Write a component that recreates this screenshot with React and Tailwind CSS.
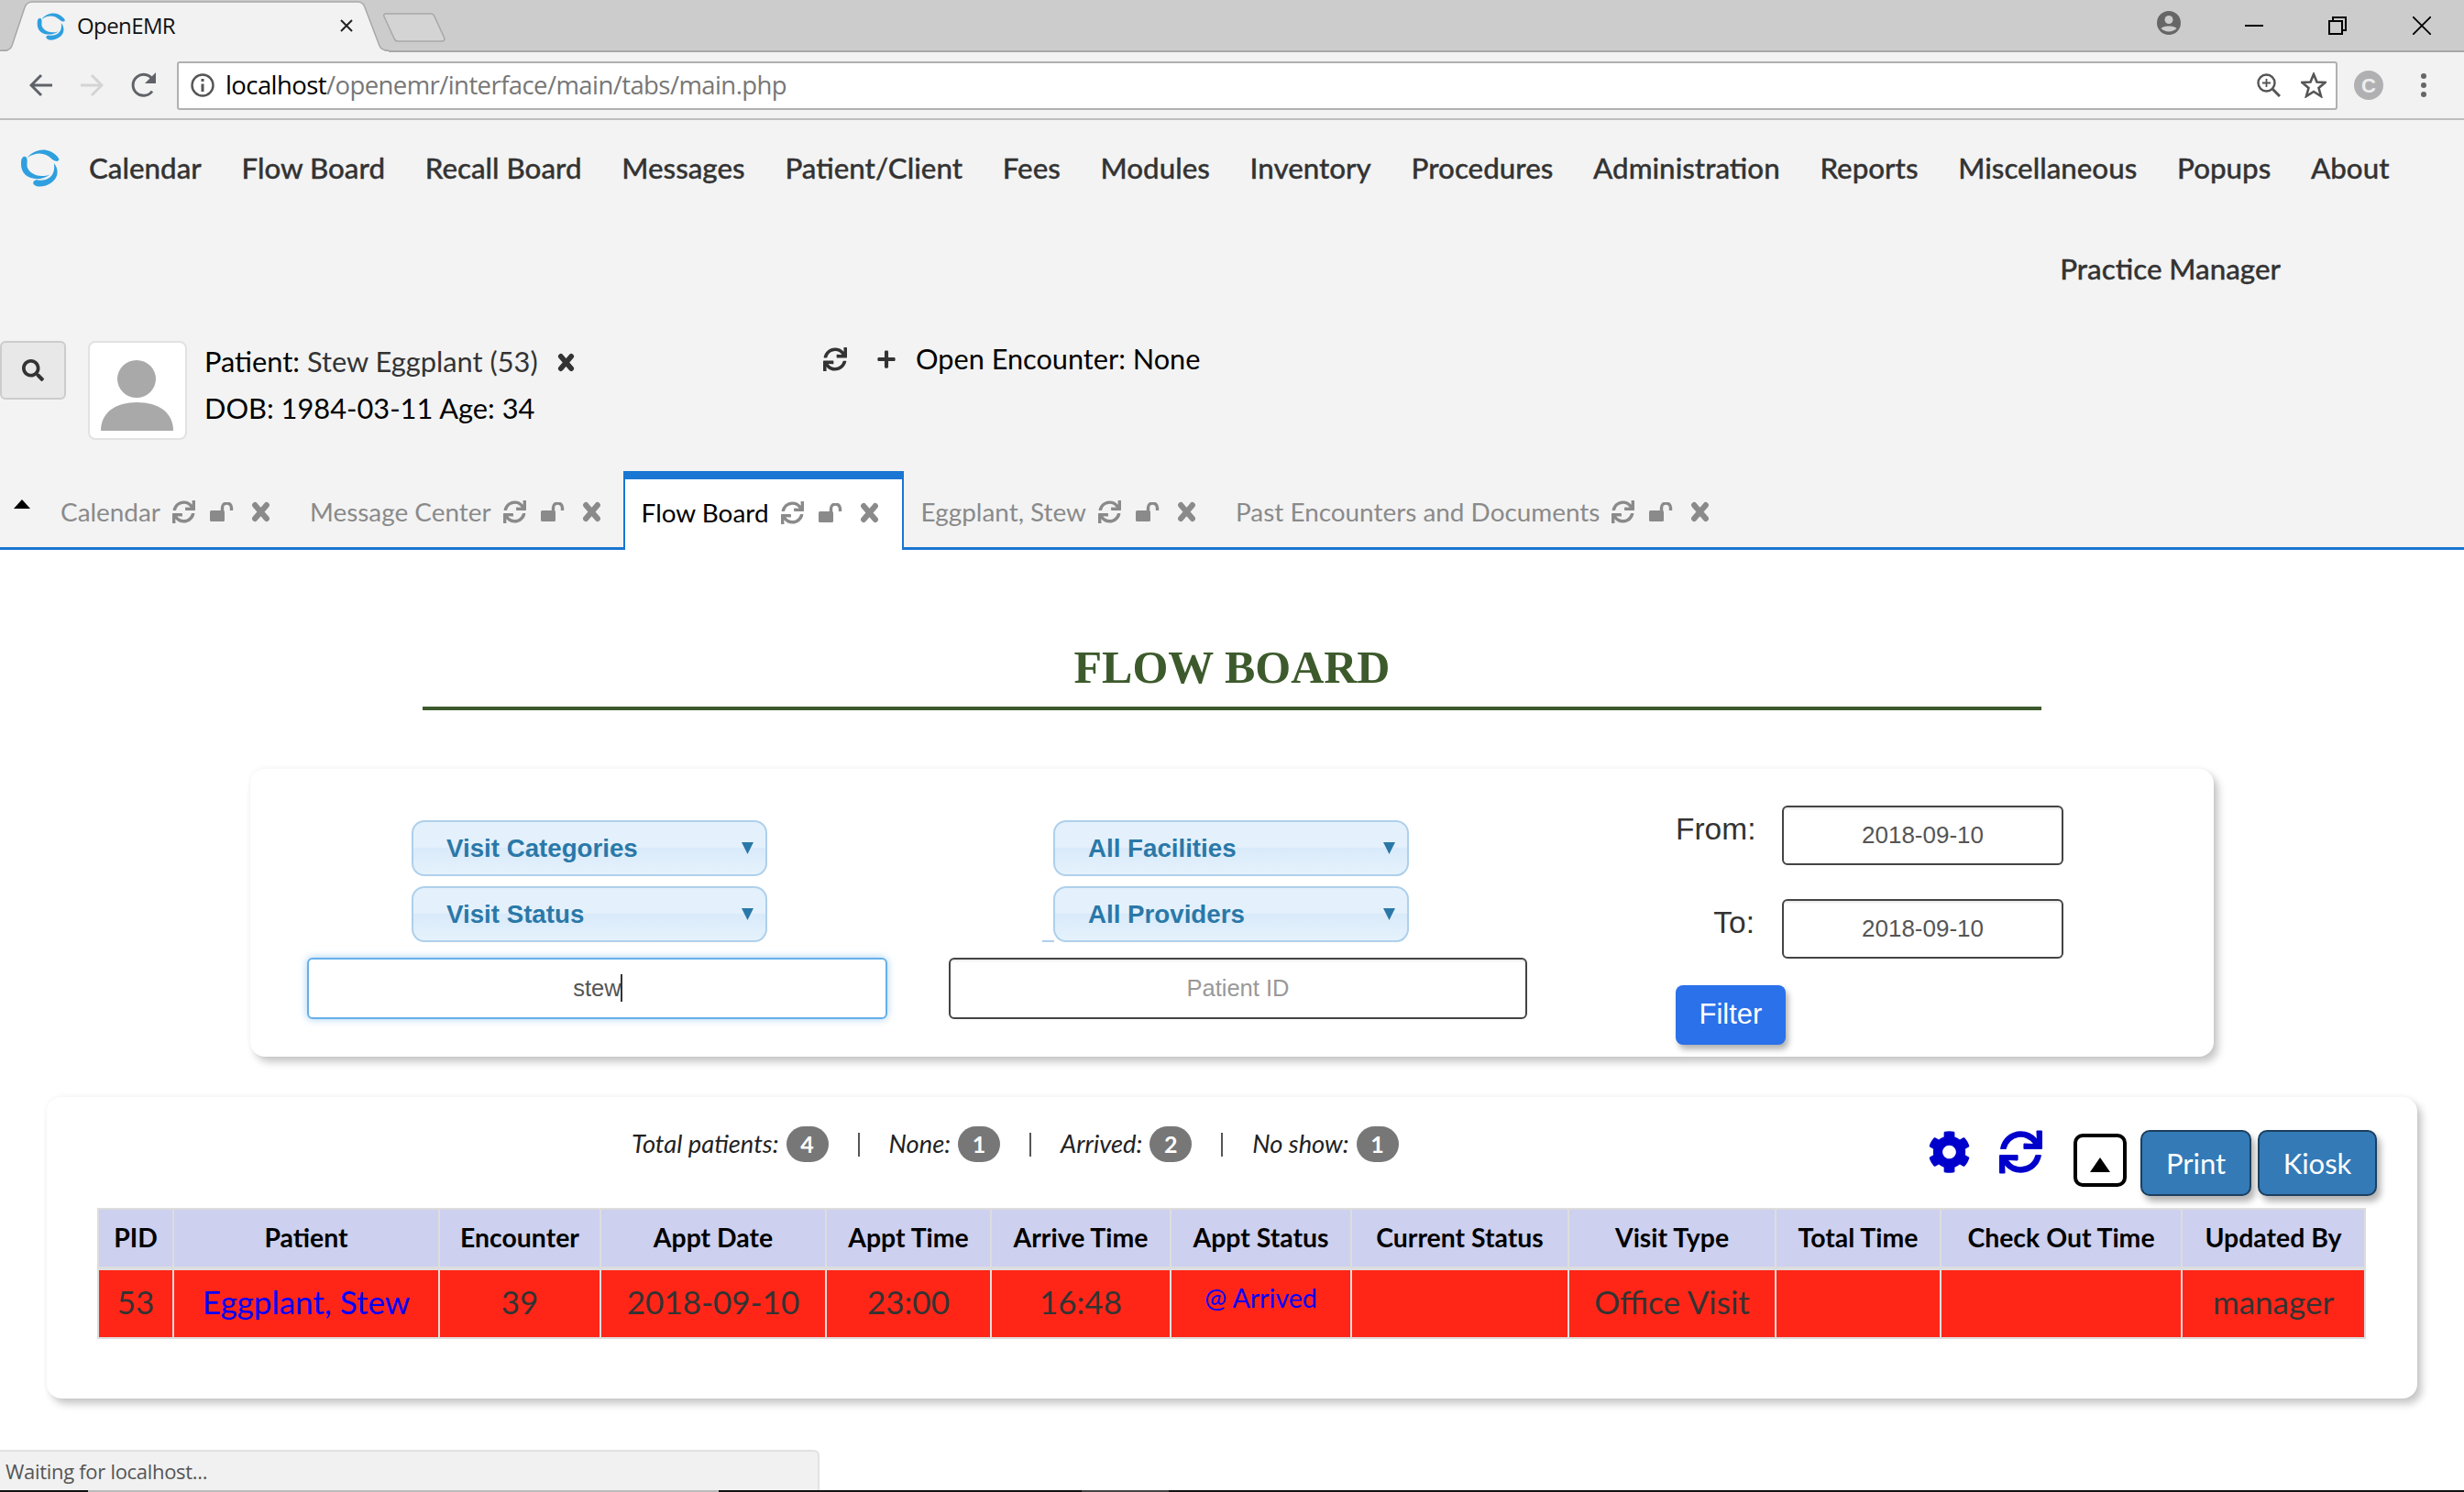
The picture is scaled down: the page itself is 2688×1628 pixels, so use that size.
import React from "react";
import { FaSync, FaPlus, FaSearch, FaCog } from "react-icons/fa";

const Logo = ({ className }) => (
  <svg viewBox="35 28 135 128" className={className} fill="#2f9fdf">
    <path d="M58 62C80 35 125 20 160 58Q170 70 160 73Q150 75 140 65C120 45 90 40 58 62Z" />
    <path d="M40 65Q48 52 57 62Q60 70 58 85C55 105 90 135 135 118C100 145 35 135 38 80Q38 72 40 65Z" />
    <path d="M148 80C165 100 165 130 135 148C115 160 90 162 80 150Q75 140 88 136C125 142 155 125 148 80Z" />
  </svg>
);

const Lock = ({ className }) => (
  <svg viewBox="0 0 27 21" className={className}>
    <rect x="0" y="9" width="16" height="12" rx="1.5" fill="currentColor" />
    <path d="M13.5 10V6a5 5 0 0 1 10 0v3" fill="none" stroke="currentColor" strokeWidth="3.4" />
  </svg>
);

const Cross = ({ className }) => (
  <svg viewBox="0 0 20 22" className={className} fill="none" stroke="currentColor" strokeWidth="6" strokeLinecap="round">
    <path d="M4 4L16 18M16 4L4 18" />
  </svg>
);

const nav1 = ["Calendar", "Flow Board", "Recall Board", "Messages", "Patient/Client", "Fees", "Modules", "Inventory", "Procedures", "Administration", "Reports", "Miscellaneous", "Popups", "About"];

const Tab = ({ label, active }) => (
  <div className={active
    ? "h-[86px] pb-[4px] pl-[18px] pr-[25px] flex items-center border-t-[9px] border-x-2 border-x-[#1976d2] border-t-[#1976d2] bg-white -mb-[3px] text-black"
    : "h-[83px] pt-[6px] pl-[19px] pr-[24px] flex items-center text-[#8a8a8a]"}>
    <span className="text-[27.9px] leading-none">{label}</span>
    <FaSync className="ml-[13px] w-[25px] h-[25px] text-[#8a8a8a]" />
    <Lock className="ml-[16px] w-[27px] h-[21px] text-[#8a8a8a]" />
    <Cross className="ml-[18px] w-[21px] h-[23px] text-[#8a8a8a]" />
  </div>
);

const Select = ({ label, tick }) => (
  <div className="relative ml-[114px] w-[388px] h-[61px] pl-[36px] pr-[13px] flex items-center justify-between rounded-[14px] border-2 border-[#aed0ec] bg-[linear-gradient(#e4f1fc_0%,#e4f1fc_48%,#d9eafa_50%,#e5f2fc_100%)]">
    <span className="font-['Liberation_Sans'] font-bold text-[27.7px] text-[#2a78a8]">{label}</span>
    <svg viewBox="0 0 13 13" className="w-[13px] h-[13px]"><polygon points="0,0 13,0 6.5,13" fill="#2a78a8" /></svg>
    {tick && <span className="absolute -left-[14px] -bottom-[2px] w-[13px] h-[2px] bg-[#aed0ec]" />}
  </div>
);

const Field = (props) => (
  <input readOnly {...props} className="w-[631px] h-[67px] rounded-[6px] border-2 border-[#444] bg-white text-center font-['Liberation_Sans'] text-[25.5px] text-[#555] placeholder:text-[#999] outline-none shadow-[inset_0_2px_2px_rgba(0,0,0,0.08)]" />
);

const DateRow = ({ label }) => (
  <div className="flex items-center h-[65px]">
    <span className="w-[86px] text-right font-['Liberation_Sans'] text-[33.5px] text-[#333] -mt-[13px] whitespace-nowrap">{label}</span>
    <input readOnly value="2018-09-10" className="ml-[30px] w-[307px] h-[65px] rounded-[6px] border-2 border-[#444] bg-white text-center font-['Liberation_Sans'] text-[26px] text-[#555] outline-none shadow-[inset_0_2px_2px_rgba(0,0,0,0.08)]" />
  </div>
);

const Stat = ({ label, n }) => (
  <span className="flex items-center">
    <i className="text-[27.3px] text-[#222]">{label}</i>
    <b className="ml-[8px] w-[46px] h-[39px] rounded-[20px] bg-[#777] text-white text-[25px] flex items-center justify-center">{n}</b>
  </span>
);

const Sep = () => <span className="mx-[32px] w-[2px] h-[26px] bg-[#555]" />;

const heads = ["PID", "Patient", "Encounter", "Appt Date", "Appt Time", "Arrive Time", "Appt Status", "Current Status", "Visit Type", "Total Time", "Check Out Time", "Updated By"];
const cls = ["w-[82px]", "w-[290px]", "w-[176px]", "w-[246px]", "w-[180px]", "w-[196px]", "w-[197px]", "w-[237px]", "w-[226px]", "w-[180px]", "w-[263px]", "w-[200px]"];

export default function App() {
  return (
    <div className="w-[2688px] h-[1628px] overflow-hidden flex flex-col relative bg-white font-['Lato',sans-serif]">
      {/* browser tab strip */}
      <div className="relative h-[57px] bg-[#cccccc] border-b-2 border-[#a8a8a8] flex items-center shrink-0">
        <svg className="absolute left-0 top-0 w-[500px] h-[57px]" viewBox="0 0 500 57">
          <path d="M0 56H5Q11 56 13 50L27 8Q29 2 36 2H390Q396 2 398 8L414 50Q416 56 424 56V57H0Z" fill="#f2f2f2" />
          <path d="M0 55H5Q11 55 13 50L27 8Q29 2 36 2H390Q396 2 398 8L414 50Q416 55 424 55" fill="none" stroke="#a8a8a8" strokeWidth="1.5" />
          <path d="M421 15H470Q473 15 474 18L485 42Q485 45 482 45H434Q431 45 430 42L419 18Q418 15 421 15Z" fill="#d4d4d4" stroke="#a8a8a8" strokeWidth="1.5" />
        </svg>
        <div className="relative flex items-center w-[345px] ml-[40px]">
          <Logo className="w-[32px] h-[32px]" />
          <span className="ml-[12px] font-['Open_Sans'] text-[24px] tracking-[-0.6px] text-[#111]">OpenEMR</span>
          <svg viewBox="0 0 14 14" className="ml-auto w-[14px] h-[14px]" stroke="#222" strokeWidth="2"><path d="M1 1L13 13M13 1L1 13" /></svg>
        </div>
        <div className="relative ml-auto flex items-center pr-[36px]">
          <svg viewBox="0 0 26 26" className="w-[26px] h-[26px] -mt-[6px]">
            <circle cx="13" cy="13" r="13" fill="#666" />
            <circle cx="13" cy="9.5" r="4.5" fill="#ccc" />
            <path d="M4.5 19c2-3.5 15-3.5 17 0-4 4.5-13 4.5-17 0z" fill="#ccc" />
          </svg>
          <span className="ml-[70px] w-[20px] h-[2px] bg-black" />
          <svg viewBox="0 0 20 20" className="ml-[71px] w-[20px] h-[20px]" fill="none" stroke="#000" strokeWidth="2"><path d="M5 5V1H19V15H15" /><rect x="1" y="5" width="14" height="14" /></svg>
          <svg viewBox="0 0 20 20" className="ml-[72px] w-[20px] h-[20px]" stroke="#000" strokeWidth="1.8"><path d="M0 0L20 20M20 0L0 20" /></svg>
        </div>
      </div>

      {/* address bar */}
      <div className="h-[74px] bg-[#f2f2f2] border-b-2 border-[#bdbdbd] flex items-center pl-[32px] shrink-0">
        <svg viewBox="0 0 25 26" className="w-[25px] h-[26px]" fill="none" stroke="#5f6368" strokeWidth="3"><path d="M25 13H3M13 2L2 13L13 24" /></svg>
        <svg viewBox="0 0 25 26" className="ml-[31px] w-[25px] h-[26px]" fill="none" stroke="#d4d4d4" strokeWidth="3"><path d="M0 13H22M12 2L23 13L12 24" /></svg>
        <svg viewBox="0 0 28 28" className="ml-[30px] w-[28px] h-[28px]" fill="none"><path d="M23 20.5A11.5 11.5 0 1 1 23.5 8" stroke="#5f6368" strokeWidth="3" /><polygon points="27,0 27,12 15,12" fill="#5f6368" /></svg>
        <div className="ml-[22px] w-[2357px] h-[53px] bg-white border-2 border-[#b0b0b0] rounded-[3px] flex items-center pl-[13px] pr-[10px]">
          <svg viewBox="0 0 26 26" className="w-[26px] h-[26px]" fill="none" stroke="#555" strokeWidth="2.4"><circle cx="13" cy="13" r="11.5" /><path d="M13 11.5V20" strokeWidth="3" /><path d="M13 6V9" strokeWidth="3" /></svg>
          <span className="ml-[12px] font-['Open_Sans'] text-[27.5px] tracking-[-0.58px] text-black">localhost<span className="text-[#777]">/openemr/interface/main/tabs/main.php</span></span>
          <svg viewBox="0 0 26 26" className="ml-auto w-[26px] h-[26px]" fill="none" stroke="#555" strokeWidth="2.4"><circle cx="10.5" cy="10.5" r="9" /><path d="M17 17L25 25" strokeWidth="3" /><path d="M10.5 6V15M6 10.5H15" strokeWidth="1.8" /></svg>
          <svg viewBox="0 0 28 28" className="ml-[22px] w-[28px] h-[28px]" fill="none" stroke="#555" strokeWidth="2.6"><polygon points="14,2 17.5,10.5 26.5,11 19.5,17 22,26 14,21 6,26 8.5,17 1.5,11 10.5,10.5" /></svg>
        </div>
        <span className="ml-[18px] w-[32px] h-[32px] rounded-full bg-[#b0b0b2] text-[#eee] font-['Liberation_Sans'] font-bold text-[22px] flex items-center justify-center">C</span>
        <svg viewBox="0 0 6 26" className="ml-[41px] w-[6px] h-[26px]" fill="#666"><circle cx="3" cy="3" r="3" /><circle cx="3" cy="13" r="3" /><circle cx="3" cy="23" r="3" /></svg>
      </div>

      {/* application header */}
      <div className="bg-[#f3f3f3] shrink-0">
        <div className="h-[106px] pb-[2px] flex items-center pl-[22px]">
          <Logo className="w-[44px] h-[44px] -mt-[2px]" />
          <nav className="ml-[31px] flex items-center gap-[43.75px] text-[31.3px] font-medium text-[#333] [-webkit-text-stroke:0.35px_#333]">
            {nav1.map((n) => <span key={n}>{n}</span>)}
          </nav>
        </div>
        <div className="h-[112px] flex items-center justify-end pr-[200px] text-[31.3px] font-medium text-[#333] [-webkit-text-stroke:0.35px_#333]">
          Practice Manager
        </div>
        <div className="mt-[23px] h-[108px] flex">
          <button className="w-[72px] h-[64px] bg-[#e8e8e8] border-2 border-[#ccc] rounded-[6px] flex items-center justify-center"><FaSearch className="w-[24px] h-[24px] text-[#333]" /></button>
          <div className="ml-[24px] w-[108px] h-[108px] bg-white border-2 border-[#e2e2e2] rounded-[8px]">
            <svg viewBox="0 0 104 104" className="w-full h-full">
              <ellipse cx="51" cy="39.5" rx="21" ry="20.5" fill="#a9a9a9" />
              <path d="M12 96C12 76 28 65 51.5 65S91 76 91 96Z" fill="#a9a9a9" />
            </svg>
          </div>
          <div className="ml-[19px] w-[675px] text-[30.8px] text-black">
            <div className="h-[46px] flex items-center">
              <span>Patient: <span className="text-[#333]">Stew Eggplant (53)</span></span>
              <Cross className="ml-[21px] w-[19px] h-[21px] text-[#333]" />
            </div>
            <div className="mt-[5px] h-[46px] flex items-center">DOB: 1984-03-11 Age: 34</div>
          </div>
          <div className="h-[42px] -mt-[1px] flex items-center">
            <FaSync className="w-[26px] h-[26px] text-[#333]" />
            <FaPlus className="ml-[32px] w-[22px] h-[22px] text-[#333]" />
            <span className="ml-[21px] text-[30.7px] text-black">Open Encounter: None</span>
          </div>
        </div>
        <div className="mt-[34px] h-[86px] flex items-center border-b-[3px] border-[#1976d2] pl-[15px]">
          <svg viewBox="0 0 18 10" className="w-[18px] h-[10px] -mt-[12px] mr-[14px]"><polygon points="9,0 18,10 0,10" fill="#000" /></svg>
          <Tab label="Calendar" />
          <Tab label="Message Center" />
          <Tab label="Flow Board" active />
          <Tab label="Eggplant, Stew" />
          <Tab label="Past Encounters and Documents" />
        </div>
      </div>

      {/* page */}
      <main className="flex-1 flex flex-col items-center">
        <h1 className="mt-[100px] h-[56px] leading-[56px] font-['Liberation_Serif'] font-bold text-[50px] text-[#3d5a2c]">FLOW BOARD</h1>
        <div className="mt-[15px] w-[1766px] h-[4px] bg-[#3d5a2c]" />

        <section className="mt-[64px] w-[2142px] h-[314px] bg-white rounded-[16px] shadow-[5px_6px_9px_rgba(0,0,0,0.22),0_-1px_6px_rgba(0,0,0,0.04)] pl-[62px] flex">
          <div className="w-[633px] pt-[56px] flex flex-col">
            <Select label="Visit Categories" />
            <div className="mt-[11px]"><Select label="Visit Status" /></div>
            <div className="relative mt-[17px] w-[633px] h-[67px]">
              <input readOnly value="stew" className="w-[633px] h-[67px] rounded-[6px] border-2 border-[#66afe9] bg-white text-center font-['Liberation_Sans'] text-[25.5px] text-[#555] outline-none shadow-[0_0_8px_rgba(102,175,233,0.6)]" />
              <span className="absolute left-[342px] top-[18px] w-[2px] h-[30px] bg-[#333]" />
            </div>
          </div>
          <div className="ml-[67px] w-[631px] pt-[56px] flex flex-col">
            <Select label="All Facilities" />
            <div className="mt-[11px]"><Select label="All Providers" tick /></div>
            <div className="mt-[17px]"><Field placeholder="Patient ID" /></div>
          </div>
          <div className="ml-[162px] pt-[40px] flex flex-col">
            <DateRow label="From:" />
            <div className="mt-[37px]"><DateRow label="To:" /></div>
            <button className="mt-[29px] w-[120px] h-[65px] rounded-[8px] bg-[#2a71ea] text-white font-['Liberation_Sans'] text-[31px] shadow-[3px_5px_6px_rgba(0,0,0,0.3)]">Filter</button>
          </div>
        </section>

        <section className="mt-[44px] w-[2586px] h-[329px] bg-white rounded-[16px] shadow-[5px_6px_9px_rgba(0,0,0,0.22),0_-1px_6px_rgba(0,0,0,0.04)]">
          <div className="h-[121px] flex pl-[638px] pr-[44px]">
            <div className="h-[39px] mt-[32px] flex items-center">
              <Stat label="Total patients:" n="4" /><Sep />
              <Stat label="None:" n="1" /><Sep />
              <Stat label="Arrived:" n="2" /><Sep />
              <Stat label="No show:" n="1" />
            </div>
            <div className="ml-auto flex items-start pt-[36px]">
              <FaCog className="w-[47px] h-[48px] text-[#0000cc]" />
              <FaSync className="ml-[31px] w-[47px] h-[48px] text-[#0000cc]" />
              <span className="ml-[34px] mt-[4px] w-[58px] h-[58px] border-[4px] border-black rounded-[10px] flex items-center justify-center">
                <svg viewBox="0 0 22 16" className="w-[22px] h-[16px] mt-[10px]"><polygon points="11,0 22,16 0,16" fill="#000" /></svg>
              </span>
              <button className="ml-[15px] w-[121px] h-[72px] rounded-[10px] bg-[#337ab7] border-2 border-[#1c3f5e] text-white text-[31px] shadow-[4px_6px_7px_rgba(0,0,0,0.3)]">Print</button>
              <button className="ml-[7px] w-[130px] h-[72px] rounded-[10px] bg-[#337ab7] border-2 border-[#1c3f5e] text-white text-[31px] shadow-[4px_6px_7px_rgba(0,0,0,0.3)]">Kiosk</button>
            </div>
          </div>
          <table className="ml-[55px] w-[2473px] table-fixed border-collapse">
            <colgroup>{cls.map((c, i) => <col key={i} className={c} />)}</colgroup>
            <thead>
              <tr className="bg-[#cdd0ee]">
                {heads.map((h) => <th key={h} className="h-[65px] p-0 pb-[2px] border-2 border-[#ddd] border-b-[4px] text-center text-[28.4px] font-bold text-black">{h}</th>)}
              </tr>
            </thead>
            <tbody>
              <tr className="bg-[#ff2617] text-[35px] text-[#333]">
                <td className="h-[76px] p-0 pb-[5px] text-center border-2 border-[#ddd]">53</td>
                <td className="p-0 pb-[5px] text-center border-2 border-[#ddd] text-[#0000ff]">Eggplant, Stew</td>
                <td className="p-0 pb-[5px] text-center border-2 border-[#ddd]">39</td>
                <td className="p-0 pb-[5px] text-center border-2 border-[#ddd]">2018-09-10</td>
                <td className="p-0 pb-[5px] text-center border-2 border-[#ddd]">23:00</td>
                <td className="p-0 pb-[5px] text-center border-2 border-[#ddd]">16:48</td>
                <td className="p-0 pb-[12px] text-center border-2 border-[#ddd] text-[28.6px] text-[#0000ff]">@ Arrived</td>
                <td className="p-0 border-2 border-[#ddd]" />
                <td className="p-0 pb-[5px] text-center border-2 border-[#ddd]">Office Visit</td>
                <td className="p-0 border-2 border-[#ddd]" />
                <td className="p-0 border-2 border-[#ddd]" />
                <td className="p-0 pb-[5px] text-center border-2 border-[#ddd]">manager</td>
              </tr>
            </tbody>
          </table>
        </section>
      </main>

      {/* status bubble */}
      <div className="absolute left-0 bottom-[2px] w-[894px] h-[44px] bg-[#f1f1f1] border-t-2 border-r-2 border-[#e2e2e2] rounded-tr-[6px] pl-[6px] flex items-center font-['Open_Sans'] text-[22px] tracking-[-0.3px] text-[#555]">Waiting for localhost...</div>
      <div className="absolute left-0 right-0 bottom-0 h-[2px] bg-[#111] flex">
        <span className="ml-[96px] w-[688px] bg-[#bbb]" />
        <span className="ml-[396px] w-[95px] bg-[#444]" />
      </div>
    </div>
  );
}
